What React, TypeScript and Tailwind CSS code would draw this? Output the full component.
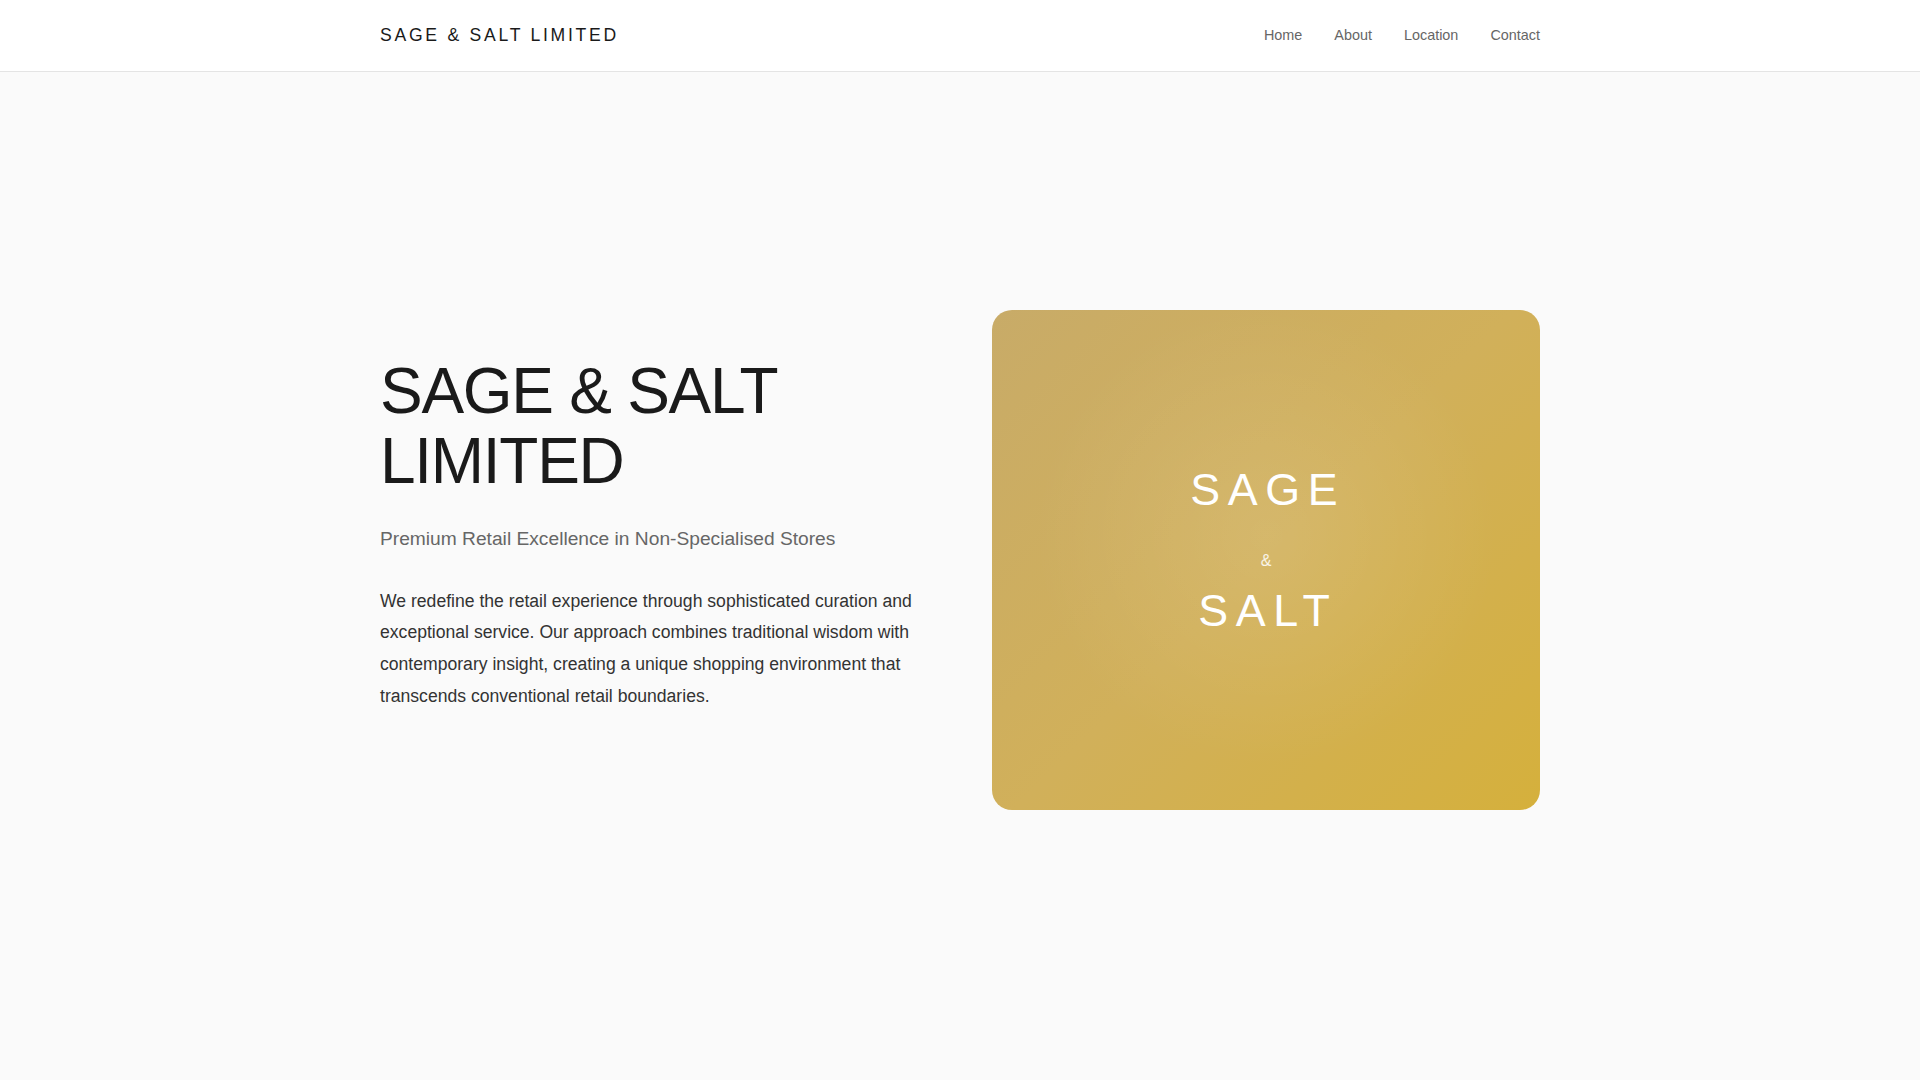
import React from "react";

export default function App() {
  const nav = ["Home", "About", "Location", "Contact"];
  return (
    <div className="min-h-screen bg-[#fafafa] font-['Liberation_Sans',Arial,sans-serif]">
      <header className="bg-white border-b border-[#e4e4e4]">
        <div className="max-w-[1200px] mx-auto px-5 h-[71px] flex items-center justify-between">
          <div className="text-[1.1rem] tracking-[0.155em] text-[#1a1a1a] leading-normal">
            SAGE &amp; SALT LIMITED
          </div>
          <nav className="flex items-center gap-8">
            {nav.map((n) => (
              <a key={n} href="#" className="text-[0.9rem] text-[#666666] leading-normal pt-[1px]">
                {n}
              </a>
            ))}
          </nav>
        </div>
      </header>

      <main className="max-w-[1200px] mx-auto px-5 pt-[238px] pb-[270px]">
        <div className="grid grid-cols-2 gap-16 items-start">
          <div className="pt-[46px]">
            <h1 className="text-[64px] leading-[1.1] tracking-[-0.02em] font-normal text-[#1a1a1a]">
              SAGE &amp; SALT
              <br />
              LIMITED
            </h1>
            <p className="mt-[28px] text-[1.2rem] leading-[1.5] text-[#666666]">
              Premium Retail Excellence in Non-Specialised Stores
            </p>
            <p className="mt-[32px] text-[1.1rem] leading-[1.8] text-[#333333]">
              We redefine the retail experience through sophisticated curation and exceptional
              service. Our approach combines traditional wisdom with contemporary insight, creating a
              unique shopping environment that transcends conventional retail boundaries.
            </p>
          </div>

          <div className="relative h-[500px] rounded-[20px] overflow-hidden bg-[linear-gradient(135deg,#c8ab68_0%,#d1b05a_50%,#d5b03c_100%)]">
            <div className="absolute inset-0 bg-[radial-gradient(circle_at_50%_45%,rgba(255,255,255,0.1)_0%,rgba(255,255,255,0)_60%)]" />
            <div className="relative h-full flex flex-col items-center justify-center pb-[19px] text-white">
              <div className="text-[2.8rem] leading-[1.2] tracking-[0.17em] pl-[0.08em]">SAGE</div>
              <div className="mt-[34px] mb-[14px] text-[16px] leading-[1.2] text-white/85">&amp;</div>
              <div className="text-[2.8rem] leading-[1.2] tracking-[0.17em] pl-[0.08em]">SALT</div>
            </div>
          </div>
        </div>
      </main>
    </div>
  );
}
